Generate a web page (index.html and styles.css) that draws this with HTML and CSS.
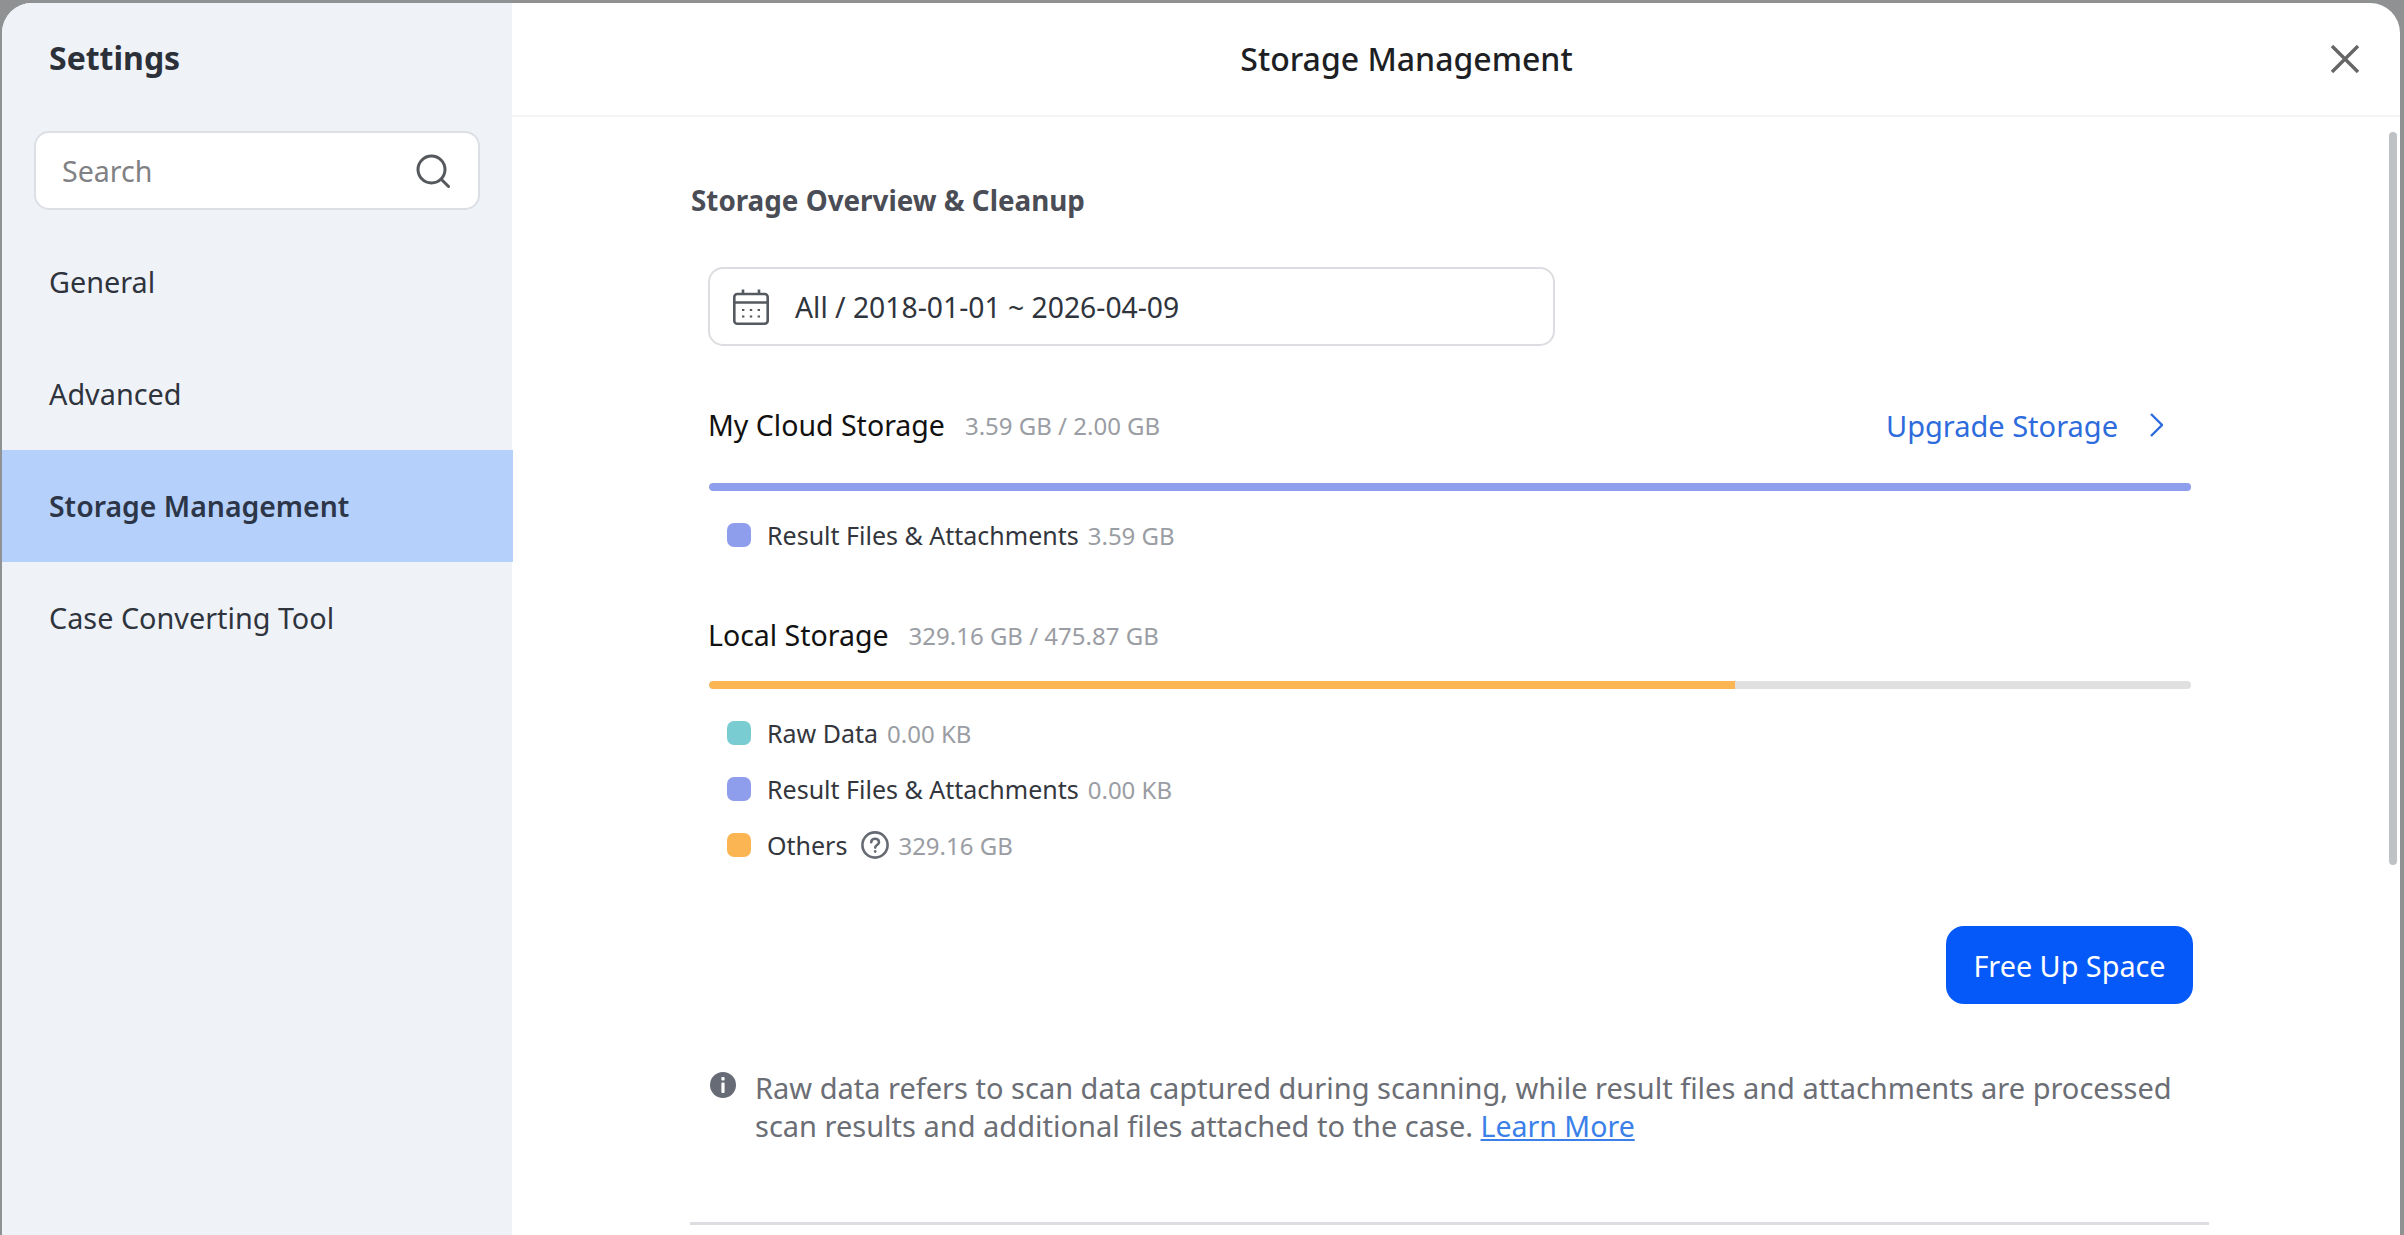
FILE: index.html
```html
<!DOCTYPE html>
<html lang="en">
<head>
    <meta charset="UTF-8">
    <meta name="viewport" content="width=device-width, initial-scale=1.0">
    <title>Settings - Storage Management</title>
    <link rel="stylesheet" href="styles.css">
</head>
<body>
    <div class="modal">
        <aside class="sidebar">
            <h2 class="sidebar-title">Settings</h2>
            <div class="search">
                <input type="text" class="search-input" placeholder="Search">
                <svg class="search-icon" viewBox="0 0 34 34" fill="none" stroke="#55585c" stroke-width="3" stroke-linecap="round">
                    <circle cx="15.5" cy="15.5" r="13.5"/>
                    <path d="M25.5 25.5 L32.5 32.5"/>
                </svg>
            </div>
            <nav class="nav">
                <a class="nav-item">General</a>
                <a class="nav-item">Advanced</a>
                <a class="nav-item active">Storage Management</a>
                <a class="nav-item">Case Converting Tool</a>
            </nav>
        </aside>

        <main class="main">
            <header class="header">
                <h1 class="header-title">Storage Management</h1>
                <svg class="close-icon" viewBox="0 0 28 28" fill="none" stroke="#666" stroke-width="3.4">
                    <path d="M1 1 L27 27 M27 1 L1 27"/>
                </svg>
            </header>

            <div class="content">
                <h3 class="section-title">Storage Overview &amp; Cleanup</h3>

                <div class="panel">
                    <div class="date-box">
                        <svg class="calendar-icon" viewBox="0 0 36 36" fill="none" stroke="#555a60" stroke-width="2.6">
                            <rect x="1.3" y="5" width="33.4" height="29.7" rx="3"/>
                            <path d="M1.3 13.5 H34.7 M10 0.5 V6 M26 0.5 V6"/>
                            <path d="M9 21 H11.4 M16.8 21 H19.2 M24.6 21 H27 M9 27.5 H11.4 M16.8 27.5 H19.2 M24.6 27.5 H27" stroke-width="2.2"/>
                        </svg>
                        <span>All / 2018-01-01 ~ 2026-04-09</span>
                    </div>

                    <div class="storage-head cloud">
                        <span class="storage-name">My Cloud Storage</span>
                        <span class="storage-size">3.59 GB / 2.00 GB</span>
                        <a class="upgrade">
                            Upgrade Storage
                            <svg class="chevron" viewBox="0 0 13 24" fill="none" stroke="#2e6bdc" stroke-width="2.4">
                                <path d="M1 1 L12 12 L1 23"/>
                            </svg>
                        </a>
                    </div>
                    <div class="bar"><div class="bar-fill purple" style="width: 100%"></div></div>
                    <ul class="legend">
                        <li class="legend-row"><i class="swatch purple"></i><span class="legend-name">Result Files &amp; Attachments</span><span class="legend-value">3.59 GB</span></li>
                    </ul>

                    <div class="storage-head local">
                        <span class="storage-name">Local Storage</span>
                        <span class="storage-size">329.16 GB / 475.87 GB</span>
                    </div>
                    <div class="bar"><div class="bar-fill orange" style="width: 69.2%"></div></div>
                    <ul class="legend">
                        <li class="legend-row"><i class="swatch teal"></i><span class="legend-name">Raw Data</span><span class="legend-value">0.00 KB</span></li>
                        <li class="legend-row"><i class="swatch purple"></i><span class="legend-name">Result Files &amp; Attachments</span><span class="legend-value">0.00 KB</span></li>
                        <li class="legend-row">
                            <i class="swatch orange"></i><span class="legend-name">Others</span>
                            <svg class="help-icon" viewBox="0 0 28 28" fill="none" stroke="#666b73" stroke-width="2.6" stroke-linecap="round">
                                <circle cx="14" cy="14" r="12.6"/>
                                <path d="M10.2 11.2 C10.2 6.6 18 6.6 18 11.2 C18 14 14.2 14 14.2 16.6"/>
                                <path d="M14.2 20.4 V20.6"/>
                            </svg>
                            <span class="legend-value">329.16 GB</span>
                        </li>
                    </ul>

                    <div class="actions">
                        <button class="primary-btn">Free Up Space</button>
                    </div>
                </div>

                <div class="note">
                    <svg class="info-icon" viewBox="0 0 26 26">
                        <circle cx="13" cy="13" r="13" fill="#666b75"/>
                        <rect x="11.4" y="5" width="3.2" height="3.4" rx="1" fill="#fff"/>
                        <rect x="11.4" y="10.4" width="3.2" height="10.6" rx="1" fill="#fff"/>
                    </svg>
                    <p class="note-text">Raw data refers to scan data captured during scanning, while result files and attachments are processed scan results and additional files attached to the case. <a class="learn-more">Learn More</a></p>
                </div>

                <div class="divider"></div>
            </div>

            <div class="scrollbar"></div>
        </main>
    </div>
</body>
</html>
```

FILE: styles.css
```css
html,
body {
    height: 100%;
}

body {
    margin: 0;
    padding: 3px 4px 0 2px;
    box-sizing: border-box;
    overflow: hidden;
    background: #8f9193;
    font-family: "Noto Sans", sans-serif;
    color: #2f343d;
}

.modal {
    display: flex;
    height: 1260px;
    background: #fff;
    border-radius: 30px 30px 0 0;
    overflow: hidden;
}

/* Sidebar */
.sidebar {
    width: 510px;
    flex-shrink: 0;
    background: #eff3f8;
}

.sidebar-title {
    margin: 0;
    padding: 0 0 0 47px;
    height: 110px;
    line-height: 110px;
    font-size: 32px;
    font-weight: 700;
    color: #2b3039;
}

.search {
    display: flex;
    align-items: center;
    justify-content: space-between;
    box-sizing: border-box;
    width: 446px;
    height: 79px;
    margin: 18px 0 0 32px;
    padding: 0 28px 0 26px;
    background: #fff;
    border: 2px solid #dcdfe4;
    border-radius: 15px;
}

.search-input {
    flex: 1;
    min-width: 0;
    border: none;
    outline: none;
    padding: 0;
    font-family: inherit;
    font-size: 28.6px;
    background: transparent;
}

.search-input::placeholder {
    color: #7f8184;
    opacity: 1;
}

.search-icon {
    width: 34px;
    height: 34px;
    flex-shrink: 0;
}

.nav {
    margin-top: 16px;
}

.nav-item {
    display: block;
    height: 112px;
    line-height: 112px;
    padding-left: 47px;
    font-size: 28.8px;
    color: #2f343d;
}

.nav-item.active {
    background: #b5d1fb;
    font-size: 28.4px;
    font-weight: 600;
    color: #2c3648;
    margin-right: -1px;
    position: relative;
}

/* Main */
.main {
    position: relative;
    flex: 1;
    min-width: 0;
}

.header {
    display: flex;
    align-items: center;
    height: 112px;
    padding-right: 41px;
    border-bottom: 2px solid #f3f4f6;
}

.header-title {
    flex: 1;
    margin: -2px 0 0;
    padding-right: 30px;
    text-align: center;
    font-size: 32px;
    font-weight: 500;
    color: #1d1f24;
}

.close-icon {
    width: 28px;
    height: 28px;
}

.content {
    padding: 63px 0 0 179px;
}

.section-title {
    margin: 0;
    line-height: 40px;
    font-size: 27.8px;
    font-weight: 700;
    color: #4a4d55;
}

.panel {
    width: 1485px;
    margin-left: 17px;
}

.date-box {
    display: flex;
    align-items: center;
    box-sizing: border-box;
    width: 847px;
    height: 79px;
    margin-top: 47px;
    padding-left: 23px;
    border: 2px solid #dcdde0;
    border-radius: 15px;
    font-size: 28.3px;
    color: #2f343d;
}

.calendar-icon {
    width: 36px;
    height: 36px;
    margin-right: 26px;
}

.storage-head {
    display: flex;
    align-items: center;
}

.storage-head.cloud {
    height: 62px;
    margin: 48px 0 27px;
}

.storage-head.local {
    height: 40px;
    margin: 68px 0 26px;
}

.storage-name {
    font-size: 28.5px;
    color: #111;
}

.storage-size {
    margin-left: 20px;
    font-size: 24px;
    color: #9a9da3;
}

.upgrade {
    display: flex;
    align-items: center;
    margin-left: auto;
    margin-right: 30px;
    font-size: 29px;
    color: #2e6bdc;
}

.chevron {
    width: 13px;
    height: 24px;
    margin-left: 32px;
}

.bar {
    height: 8px;
    margin: 0 2px 0 1px;
    background: #e0e0e0;
    border-radius: 4px;
    overflow: hidden;
}

.bar-fill {
    height: 100%;
    border-radius: 4px 0 0 4px;
}

.legend {
    margin: 32px 0 0;
    padding: 0 0 0 19px;
    list-style: none;
}

.legend-row {
    display: flex;
    align-items: center;
    height: 24px;
    margin-bottom: 32px;
    font-size: 25px;
}

.legend-row:last-child {
    margin-bottom: 0;
}

.swatch {
    width: 24px;
    height: 24px;
    margin-right: 16px;
    border-radius: 7px;
}

.purple { background: #8f9ded; }
.orange { background: #fbb552; }
.teal { background: #79cdd2; }

.legend-name {
    color: #33363d;
}

.legend-value {
    margin-left: 9px;
    font-size: 24px;
    color: #9a9da3;
}

.help-icon {
    width: 28px;
    height: 28px;
    margin-left: 14px;
}

.actions {
    display: flex;
    justify-content: flex-end;
    margin-top: 69px;
}

.primary-btn {
    width: 247px;
    height: 78px;
    border: none;
    border-radius: 18px;
    background: #0659f9;
    color: #fff;
    font-family: inherit;
    font-size: 28.8px;
}

.note {
    display: flex;
    align-items: flex-start;
    margin: 68px 0 0 19px;
}

.info-icon {
    width: 26px;
    height: 26px;
    flex-shrink: 0;
    margin-right: 19px;
}

.note-text {
    width: 1445px;
    margin: -3px 0 0;
    line-height: 38px;
    font-size: 29px;
    color: #6b6e75;
}

.learn-more {
    font-size: 28.5px;
    color: #3a80e8;
    text-decoration: underline;
}

.divider {
    width: 1519px;
    height: 3px;
    margin: 77px 0 0 -1px;
    background: #dcdde0;
}

.scrollbar {
    position: absolute;
    top: 129px;
    right: 3px;
    width: 8px;
    height: 733px;
    background: #bfc2c5;
    border-radius: 4px;
}
```
